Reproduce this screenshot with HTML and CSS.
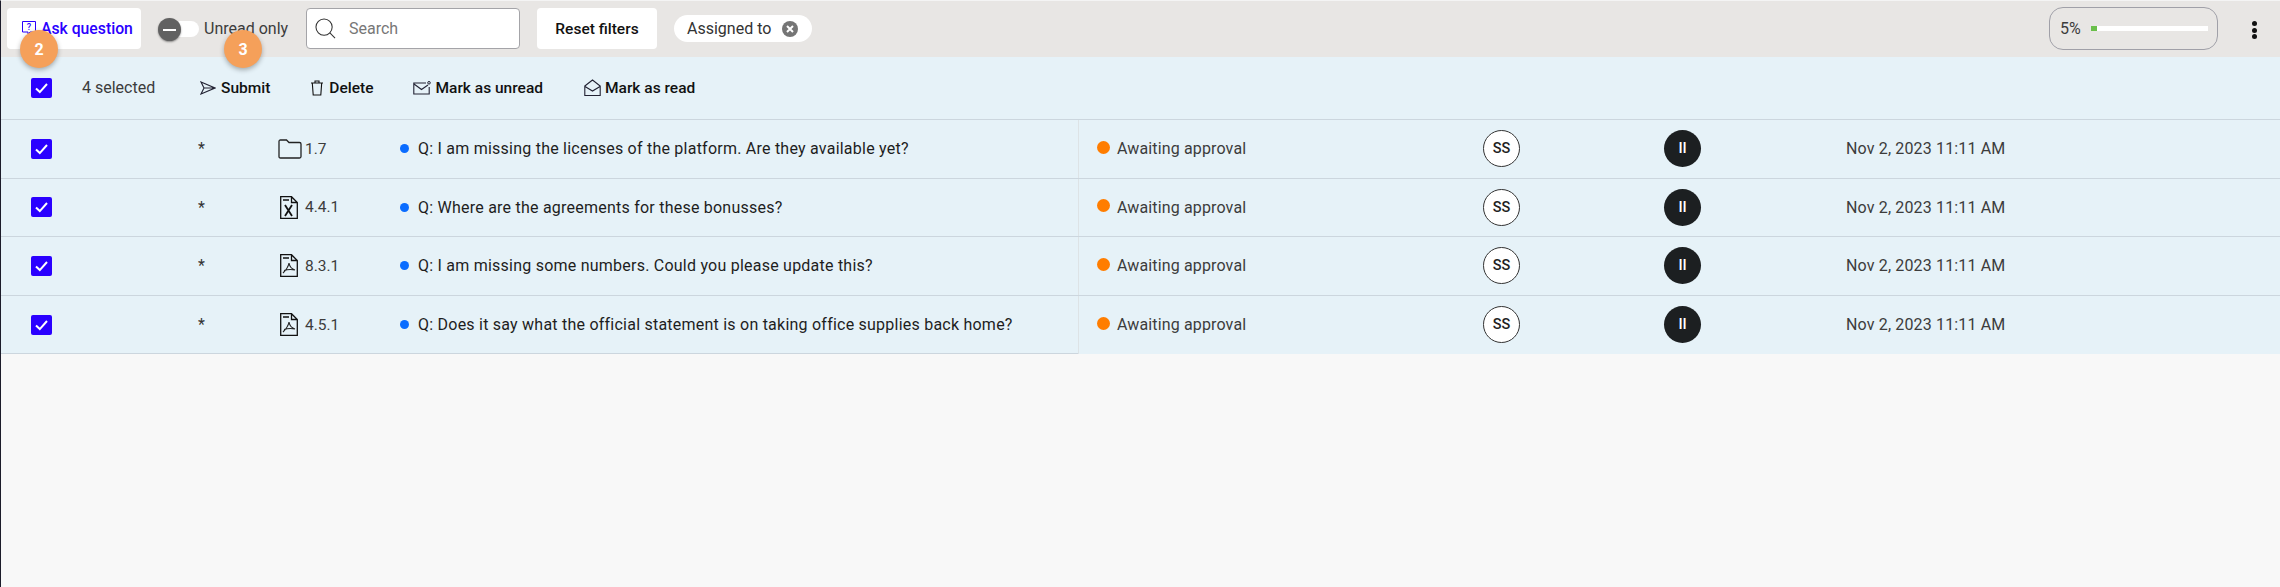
FILE: index.html
```html
<!DOCTYPE html>
<html lang="en">
<head>
<meta charset="utf-8">
<title>Questions</title>
<link rel="stylesheet" href="styles.css">
</head>
<body>
<div class="app">
  <header class="topbar">
    <button class="btn btn-ask">
      <svg class="ico-ask" viewBox="0 0 16 16"><path d="M1.5 1.5h13v10.500H9l-2 2v-2H1.500z" fill="none" stroke="#2a00ff" stroke-width="1"/><text x="8" y="9.600" text-anchor="middle" class="ico-q">?</text></svg>
      Ask question
    </button>
    <div class="toggle">
      <span class="track"></span>
      <span class="knob"><i></i></span>
      <span class="toggle-label">Unread only</span>
    </div>
    <label class="search">
      <svg class="ico-search" viewBox="0 0 22 22"><circle cx="9.500" cy="9.500" r="8.500" fill="none" stroke="#333" stroke-width="1.100"/><path d="M15.600 15.600l5.400 5.400" stroke="#333" stroke-width="1.100"/></svg>
      <span class="placeholder">Search</span>
    </label>
    <button class="btn btn-reset">Reset filters</button>
    <div class="chip">Assigned to
      <svg class="chip-x" viewBox="0 0 16 16"><circle cx="8" cy="8" r="8" fill="#757575"/><path d="M5 5l6 6M11 5l-6 6" stroke="#fff" stroke-width="2"/></svg>
    </div>
    <div class="spacer"></div>
    <div class="progress">
      <span class="pct">5%</span>
      <span class="bar"><span class="bar-fill"></span></span>
    </div>
    <div class="kebab"><i></i><i></i><i></i></div>
  </header>

  <section class="actions">
    <span class="check"><svg viewBox="0 0 21 20"><path d="M5 10.500l3.800 3.600L16 6" fill="none" stroke="#fff" stroke-width="2"/></svg></span>
    <span class="sel-count">4 selected</span>
    <span class="action act-submit"><svg viewBox="0 0 16 14"><path d="M1 1l14 6-14 6 3-6zM4 7h11" fill="none" stroke="#223" stroke-width="1.100"/></svg>Submit</span>
    <span class="action act-delete"><svg viewBox="0 0 14 16"><path d="M1 3h12M5 3V1h4v2M2.300 3l.9 12h7.600l.9-12" fill="none" stroke="#111" stroke-width="1.100"/></svg>Delete</span>
    <span class="action act-unread"><svg viewBox="0 0 18 14"><path d="M13 2H.8v11h15.400V6M1 3l7.500 5.500L15 4" fill="none" stroke="#223" stroke-width="1.100"/><circle cx="16" cy="1.800" r="1.300" fill="none" stroke="#223"/></svg>Mark as unread</span>
    <span class="action act-read"><svg viewBox="0 0 17 17"><path d="M.8 7L8.500 1l7.700 6v9.500H.8zM1 7.500l7.500 4.500L16 7.500" fill="none" stroke="#223" stroke-width="1.100"/></svg>Mark as read</span>
  </section>

  <div class="rows">
    <div class="row">
      <span class="cell-check"><span class="check"><svg viewBox="0 0 21 20"><path d="M5 10.500l3.800 3.600L16 6" fill="none" stroke="#fff" stroke-width="2"/></svg></span></span>
      <span class="star">*</span>
      <span class="index">
        <svg class="ico-folder" viewBox="0 0 24 20"><path d="M1 2.500Q1 1 2.500 1h6l2.500 2.500h10.500Q23 3.500 23 5v12.500Q23 19 21.500 19h-19Q1 19 1 17.500z" fill="none" stroke="#222" stroke-width="1.300"/></svg>
        <span>1.7</span>
      </span>
      <span class="question"><i class="blue-dot"></i>Q: I am missing the licenses of the platform. Are they available yet?</span>
      <span class="status"><i class="orange-dot"></i>Awaiting approval</span>
      <span class="avatar">SS</span>
      <span class="pause">II</span>
      <span class="date">Nov 2, 2023 11:11 AM</span>
    </div>
    <div class="row">
      <span class="cell-check"><span class="check"><svg viewBox="0 0 21 20"><path d="M5 10.500l3.800 3.600L16 6" fill="none" stroke="#fff" stroke-width="2"/></svg></span></span>
      <span class="star">*</span>
      <span class="index">
        <svg class="ico-file" viewBox="0 0 18 23"><path d="M.7.7h10.800l5.800 5.800v15.800H.7zM11.500.7v5.800h5.800" fill="none" stroke="#111" stroke-width="1.300"/><path d="M3 4h6" stroke="#111" stroke-width="1.500"/><path d="M5 9l7 11M12 9L5 20" stroke="#111" stroke-width="1.800" fill="none"/></svg>
        <span>4.4.1</span>
      </span>
      <span class="question"><i class="blue-dot"></i>Q: Where are the agreements for these bonusses?</span>
      <span class="status"><i class="orange-dot"></i>Awaiting approval</span>
      <span class="avatar">SS</span>
      <span class="pause">II</span>
      <span class="date">Nov 2, 2023 11:11 AM</span>
    </div>
    <div class="row">
      <span class="cell-check"><span class="check"><svg viewBox="0 0 21 20"><path d="M5 10.500l3.800 3.600L16 6" fill="none" stroke="#fff" stroke-width="2"/></svg></span></span>
      <span class="star">*</span>
      <span class="index">
        <svg class="ico-file" viewBox="0 0 18 23"><path d="M.7.7h10.800l5.800 5.800v15.800H.7zM11.500.7v5.800h5.800" fill="none" stroke="#111" stroke-width="1.300"/><path d="M3 4h6" stroke="#111" stroke-width="1.500"/><path d="M9 9c-.5 3-2 6-6 10M9 9c.5 3 3 6 6 7M4 16.500c3-1 7-1.500 11-.5" stroke="#222" stroke-width="1.100" fill="none"/></svg>
        <span>8.3.1</span>
      </span>
      <span class="question"><i class="blue-dot"></i>Q: I am missing some numbers. Could you please update this?</span>
      <span class="status"><i class="orange-dot"></i>Awaiting approval</span>
      <span class="avatar">SS</span>
      <span class="pause">II</span>
      <span class="date">Nov 2, 2023 11:11 AM</span>
    </div>
    <div class="row row-last">
      <span class="cell-check"><span class="check"><svg viewBox="0 0 21 20"><path d="M5 10.500l3.800 3.600L16 6" fill="none" stroke="#fff" stroke-width="2"/></svg></span></span>
      <span class="star">*</span>
      <span class="index">
        <svg class="ico-file" viewBox="0 0 18 23"><path d="M.7.7h10.800l5.800 5.800v15.800H.7zM11.500.7v5.800h5.800" fill="none" stroke="#111" stroke-width="1.300"/><path d="M3 4h6" stroke="#111" stroke-width="1.500"/><path d="M9 9c-.5 3-2 6-6 10M9 9c.5 3 3 6 6 7M4 16.500c3-1 7-1.500 11-.5" stroke="#222" stroke-width="1.100" fill="none"/></svg>
        <span>4.5.1</span>
      </span>
      <span class="question"><i class="blue-dot"></i>Q: Does it say what the official statement is on taking office supplies back home?</span>
      <span class="status"><i class="orange-dot"></i>Awaiting approval</span>
      <span class="avatar">SS</span>
      <span class="pause">II</span>
      <span class="date">Nov 2, 2023 11:11 AM</span>
    </div>
  </div>

  <span class="callout callout-2">2</span>
  <span class="callout callout-3">3</span>
</div>
</body>
</html>
```
FILE: styles.css
```css
* { box-sizing: border-box; }
html, body { margin: 0; height: 100%; }
body {
  background: #f8f8f8;
  font-family: Roboto, "Liberation Sans", sans-serif;
  font-size: 16px;
  color: #222;
  overflow: hidden;
}
.app {
  position: relative;
  height: 587px;
  border-left: 1px solid #1c1c2a;
  border-top: 1px solid #f4f4f4;
}
.topbar {
  display: flex;
  align-items: flex-start;
  height: 56px;
  background: #e8e6e4;
  padding: 7px 0 0 6px;
}
.btn {
  border: 0;
  border-radius: 4px;
  background: #fff;
  height: 41px;
  font: 500 15.500px Roboto, sans-serif;
  padding: 0;
  display: flex;
  align-items: center;
}
.btn-ask { width: 134px; padding: 0 0 0 14px; color: #2a00ff; gap: 4px; font-size: 15.750px; white-space: nowrap; }
.ico-ask { width: 16px; height: 16px; margin-top: -1px; }
.ico-q { font: 500 9px Roboto, sans-serif; fill: #2a00ff; }
.toggle {
  position: relative;
  display: flex;
  align-items: center;
  margin-left: 17px;
  height: 41px;
  width: 130px;
  padding-left: 46px;
  color: #3c3c3c;
}
.toggle-label { white-space: nowrap; }
.track {
  position: absolute;
  left: 6px;
  top: 13px;
  width: 35px;
  height: 16px;
  background: #fff;
  border-radius: 8px;
}
.knob {
  position: absolute;
  left: 0;
  top: 10px;
  width: 23px;
  height: 23px;
  border-radius: 50%;
  background: #616161;
  box-shadow: 0 1px 2px rgba(0,0,0,.4);
  display: flex;
  align-items: center;
  justify-content: center;
}
.knob i { width: 13px; height: 2px; background: #fff; }
.search {
  display: flex;
  align-items: center;
  margin-left: 18px;
  width: 214px;
  height: 41px;
  background: #fff;
  border: 1px solid #a4a4a8;
  border-radius: 4px;
  padding-left: 8px;
}
.ico-search { width: 21px; height: 21px; margin-right: 13px; }
.placeholder { color: #777; }
.btn-reset {
  margin-left: 17px;
  width: 120px;
  justify-content: center;
  color: #111;
}
.chip {
  display: flex;
  align-items: center;
  margin: 7px 0 0 17px;
  height: 27px;
  width: 138px;
  padding-left: 13px;
  border-radius: 14px;
  background: #fff;
  color: #333;
  white-space: nowrap;
}
.chip-x { width: 16px; height: 16px; margin-left: 11px; }
.spacer { flex: 1; }
.progress {
  display: flex;
  align-items: center;
  width: 169px;
  height: 43px;
  margin: -1px 32px 0 0;
  border: 1px solid #a0a0a8;
  border-radius: 14px;
  padding-left: 10px;
  color: #3c3c3c;
}
.pct { width: 31px; }
.bar { width: 117px; height: 5px; background: #fff; }
.bar-fill { display: block; width: 6px; height: 100%; background: #6abf4b; }
.kebab {
  display: flex;
  flex-direction: column;
  align-items: center;
  gap: 1.500px;
  width: 8px;
  margin: 13px 22px 0 0;
}
.kebab i { width: 5px; height: 5px; border-radius: 50%; background: #111; }
.actions {
  display: flex;
  align-items: center;
  height: 63px;
  background: #e6f2f8;
  border-bottom: 1px solid #ccd6de;
  padding: 0 0 1px 30px;
}
.check {
  display: block;
  width: 21px;
  height: 20px;
  border-radius: 2px;
  background: #2a00ff;
}
.check svg { display: block; width: 21px; height: 20px; }
.sel-count { margin-left: 30px; width: 118px; color: #3c3c3c; }
.action {
  display: flex;
  align-items: center;
  font-weight: 500;
  font-size: 15.500px;
  color: #111;
}
.act-submit { gap: 5px; }
.act-submit svg { width: 16px; height: 16px; }
.act-delete { margin-left: 40px; gap: 5px; }
.act-delete svg { width: 14px; height: 16px; }
.act-unread { margin-left: 40px; gap: 4px; }
.act-unread svg { width: 18px; height: 14px; }
.act-read { margin-left: 41px; gap: 4px; }
.act-read svg { width: 17px; height: 17px; }
.row {
  display: grid;
  grid-template-columns: 196px 80px 123px 678px 405px 181px 182px 1fr;
  align-items: center;
  height: 58.500px;
  background: #e6f2f8;
  border-bottom: 1px solid #ccd6de;
}
.cell-check { padding-left: 30px; }
.star { color: #333; padding-left: 1px; }
.index { display: flex; align-items: center; gap: 7px; color: #3c3c3c; padding-left: 3px; font-size: 15.500px; }
.ico-folder { width: 24px; height: 20px; margin-right: -4px; margin-left: -2px; }
.ico-file { width: 18px; height: 23px; }
.question { display: flex; align-items: center; color: #1e1e1e; align-self: stretch; letter-spacing: .23px; }
.blue-dot { width: 9px; height: 9px; border-radius: 50%; background: #0a6cff; margin-right: 9px; }
.status {
  display: flex;
  align-items: center;
  align-self: stretch;
  border-left: 1px solid #dde3e6;
  padding-left: 18px;
  color: #3c3c3c;
  letter-spacing: .14px;
}
.orange-dot { width: 13px; height: 13px; border-radius: 50%; background: #ff7d00; margin-right: 7px; margin-top: -3px; }
.avatar, .pause {
  width: 37px;
  height: 37px;
  border-radius: 50%;
  display: flex;
  align-items: center;
  justify-content: center;
  font-size: 14.500px;
  font-weight: 500;
}
.avatar { background: #fff; border: 1px solid #333; color: #222; }
.pause { background: #1c1f21; color: #fff; }
.date { color: #3c3c3c; letter-spacing: .15px; }
.row-last { border-bottom: 0; position: relative; }
.row-last::after {
  content: "";
  position: absolute;
  left: 0;
  bottom: 0;
  width: 1077px;
  height: 1px;
  background: #ccd6de;
}
.callout {
  position: absolute;
  top: 29px;
  width: 38px;
  height: 38px;
  border-radius: 50%;
  background: #f5a05a;
  color: #fff;
  font-weight: 700;
  font-size: 16px;
  display: flex;
  align-items: center;
  justify-content: center;
  box-shadow: 0 2px 5px rgba(0,0,0,.3);
}
.callout-2 { left: 19px; }
.callout-3 { left: 223px; }
```
